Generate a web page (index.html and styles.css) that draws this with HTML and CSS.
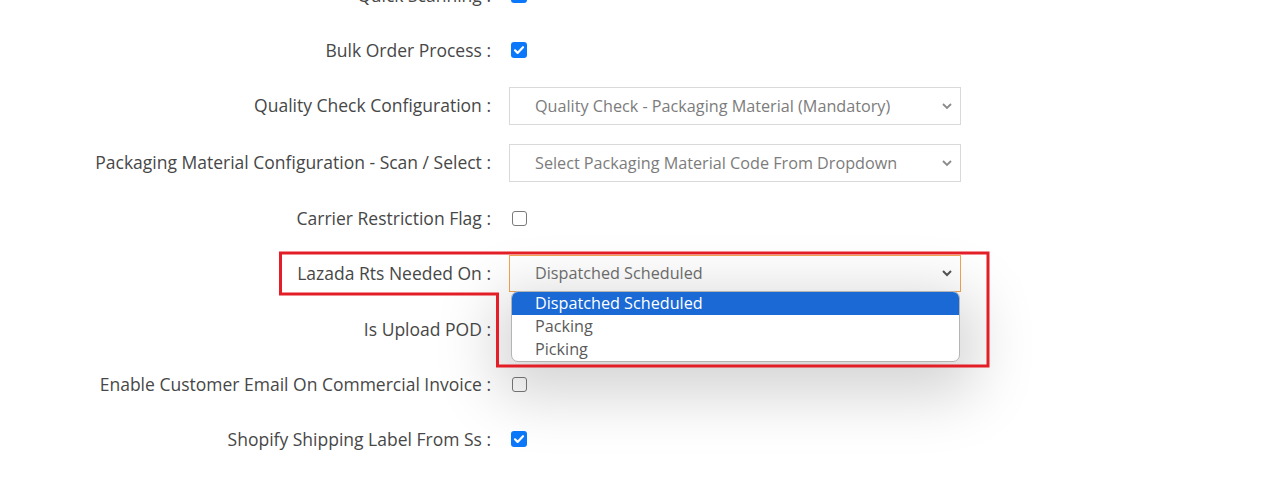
FILE: index.html
```html
<!DOCTYPE html>
<html>
<head>
<meta charset="utf-8">
<link rel="stylesheet" href="styles.css">
</head>
<body>
<div class="form">
  <div class="row"><label class="lbl">Quick Scanning :</label><div class="ctl"><span class="cb on"><svg viewBox="0 0 16 16"><path d="M4 8.3l2.6 2.6L12 5.2" /></svg></span></div></div>
  <div class="row"><label class="lbl">Bulk Order Process :</label><div class="ctl"><span class="cb on"><svg viewBox="0 0 16 16"><path d="M4 8.3l2.6 2.6L12 5.2" /></svg></span></div></div>
  <div class="row gap2"><label class="lbl">Quality Check Configuration :</label><div class="ctl"><div class="sel"><span>Quality Check - Packaging Material (Mandatory)</span><svg class="chev" viewBox="0 0 12 8"><path d="M2 2l4 4 4-4"/></svg></div></div></div>
  <div class="row gap1"><label class="lbl">Packaging Material Configuration - Scan / Select :</label><div class="ctl"><div class="sel"><span>Select Packaging Material Code From Dropdown</span><svg class="chev" viewBox="0 0 12 8"><path d="M2 2l4 4 4-4"/></svg></div></div></div>
  <div class="row"><label class="lbl">Carrier Restriction Flag :</label><div class="ctl"><span class="cb"></span></div></div>
  <div class="row gap1"><label class="lbl">Lazada Rts Needed On :</label><div class="ctl"><div class="sel focus"><span>Dispatched Scheduled</span><svg class="chev" viewBox="0 0 12 8"><path d="M2 2l4 4 4-4"/></svg></div>
    <ul class="menu">
      <li class="hl">Dispatched Scheduled</li>
      <li>Packing</li>
      <li>Picking</li>
    </ul></div></div>
  <div class="row"><label class="lbl">Is Upload POD :</label><div class="ctl"><span class="cb"></span></div></div>
  <div class="row"><label class="lbl">Enable Customer Email On Commercial Invoice :</label><div class="ctl"><span class="cb"></span></div></div>
  <div class="row"><label class="lbl">Shopify Shipping Label From Ss :</label><div class="ctl"><span class="cb on"><svg viewBox="0 0 16 16"><path d="M4 8.3l2.6 2.6L12 5.2" /></svg></span></div></div>
</div>
<svg class="annot" width="1287" height="486" viewBox="0 0 1287 486"><polygon points="280.5,253 988,253 988,366 497.5,366 497.5,294 280.5,294" /></svg>
</body>
</html>
```

FILE: styles.css
```css
html, body {
  margin: 0;
  padding: 0;
  background: #fff;
  overflow: hidden;
}
body {
  font-family: "Open Sans", "Liberation Sans", sans-serif;
  font-size: 16px;
  color: #454545;
  width: 1287px;
  height: 486px;
  position: relative;
}
.form {
  margin-top: -32.5px;
  display: flex;
  flex-direction: column;
}
.row {
  height: 55px;
  flex: none;
  display: grid;
  grid-template-columns: 491px 452px;
  column-gap: 18px;
  align-items: center;
}
.row.gap2 { margin-bottom: 2px; }
.row.gap1 { margin-bottom: 1px; }
.lbl {
  text-align: right;
  white-space: nowrap;
  font-size: 17.5px;
  color: #474747;
}
.ctl {
  position: relative;
  display: flex;
  align-items: center;
}
.cb {
  box-sizing: border-box;
  width: 15px;
  height: 15px;
  margin-left: 3px;
  border: 1.5px solid #7a7a7a;
  border-radius: 3px;
  display: flex;
  align-items: center;
  justify-content: center;
  background: #fff;
}
.cb.on {
  width: 16px;
  height: 16px;
  margin-left: 2px;
  border: none;
  background: #0b78fb;
}
.cb svg {
  width: 16px;
  height: 16px;
}
.cb svg path {
  fill: none;
  stroke: #fff;
  stroke-width: 2.2;
  stroke-linecap: round;
  stroke-linejoin: round;
}
.sel {
  box-sizing: border-box;
  width: 452px;
  height: 38px;
  margin-top: 1px;
  border: 1px solid #d9d9d9;
  display: flex;
  align-items: center;
  justify-content: space-between;
  padding: 0 7px 0 25px;
  color: #7c7c7c;
  background: #fff;
  font-size: 16.2px;
}
.sel.focus {
  border-color: #f2a552;
  height: 37px;
  margin-top: 0;
  color: #6f6f6f;
}
.chev {
  width: 12px;
  height: 8px;
}
.chev path {
  fill: none;
  stroke: #8a8a8a;
  stroke-width: 1.8;
}
.sel.focus .chev path {
  stroke: #555;
  stroke-width: 2;
}
.menu {
  position: absolute;
  left: 2px;
  top: calc(50% + 18px);
  width: 449px;
  box-sizing: border-box;
  margin: 0;
  padding: 0;
  list-style: none;
  background: #fff;
  border: 1px solid #b4b4b4;
  border-radius: 7px;
  overflow: hidden;
  box-shadow: 0 18px 60px 16px rgba(0,0,0,0.17);
  z-index: 2;
}
.menu li {
  height: 23px;
  line-height: 23px;
  padding-left: 23px;
  color: #5a5a5a;
  font-size: 16.2px;
}
.menu li.hl {
  background: #1a69d4;
  color: #fff;
}
.annot {
  position: absolute;
  left: 0;
  top: 0;
  pointer-events: none;
  z-index: 5;
}
.annot polygon {
  fill: none;
  stroke: #e31e26;
  stroke-width: 3;
}
```
